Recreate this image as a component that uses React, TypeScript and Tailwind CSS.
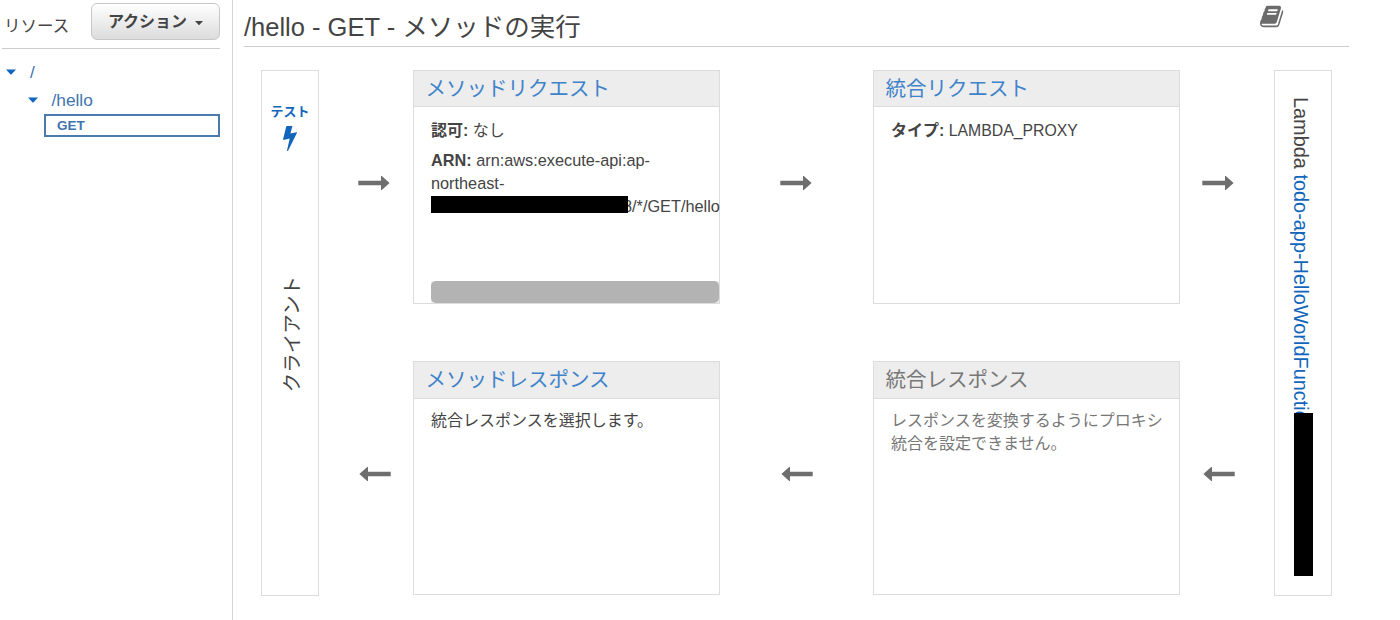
import React from 'react';

const RightArrow = ({ className = '' }: { className?: string }) => (
  <svg className={className} width="32" height="14" viewBox="0 0 32 14" fill="#6e6e6e">
    <path d="M0.3 4.7H23V0h0.8L31.6 7L23.8 14H23V9.3H0.3z" />
  </svg>
);

const Caret = ({ className = '' }: { className?: string }) => (
  <svg className={className} viewBox="0 0 10 5" fill="currentColor">
    <path d="M0 0H10L5.6 4.7Q5 5.2 4.4 4.7z" />
  </svg>
);

const BookIcon = () => (
  <svg width="25" height="25" viewBox="0 0 1792 1792" fill="#6b6b6b">
    <path d="M1639 478q40 57 18 129l-275 906q-19 64-76.500 107.500t-122.500 43.500h-923q-77 0-148.500-53.500t-99.500-131.500q-24-67-2-127 0-4 3-27t4-37q1-8-3-21.500t-3-19.500q2-11 8-21t16.500-23.500 16.500-23.500q23-38 45-91.500t30-91.500q3-10 .5-30t-.5-28q3-11 17-28t17-23q21-36 42-92t25-90q1-9-2.500-32t.5-28q4-13 22-30.500t22-22.500q19-26 42.500-84.500t27.500-96.500q1-8-3-25.500t-2-26.500q2-8 9-18t18-23 17-21q8-12 16.500-30.500t15-35 16-36 19.500-32 26.500-23.500 36-11.500 47.500 5.500l-1 3q38-9 51-9h761q74 0 114 56t18 130l-274 906q-36 119-71.500 153.500t-128.500 34.500h-869q-27 0-38 15-11 16-1 43 24 70 144 70h923q29 0 56-15.500t35-41.500l300-987q7-22 5-57 38 15 59 43zm-1064 2q-4 13 2 22.500t20 9.500h608q13 0 25.500-9.500t16.500-22.500l21-64q4-13-2-22.500t-20-9.500h-608q-13 0-25.500 9.500t-16.500 22.500zm-83 256q-4 13 2 22.500t20 9.500h608q13 0 25.500-9.500t16.500-22.500l21-64q4-13-2-22.500t-20-9.500h-608q-13 0-25.500 9.500t-16.500 22.500z" />
  </svg>
);

interface ArrowColumnProps {
  className: string;
}

// Request arrow on top, response arrow below
const ArrowColumn: React.FC<ArrowColumnProps> = ({ className }) => (
  <div className={`shrink-0 flex flex-col pt-[106px] gap-[277px] ${className}`}>
    <RightArrow />
    <RightArrow className="rotate-180 ml-px" />
  </div>
);

interface StageCardProps {
  title: string;
  disabled?: boolean;
  headerClass?: string;
  bodyClass?: string;
  children: React.ReactNode;
}

const StageCard: React.FC<StageCardProps> = ({ title, disabled = false, headerClass = 'h-9', bodyClass = 'pt-[10px]', children }) => (
  <section className={`h-[234px] border border-[#dcdcdc] flex flex-col ${disabled ? 'text-[#777]' : 'text-[#444]'}`}>
    <h2 className={`shrink-0 box-content border-b border-[#dcdcdc] bg-[#ededed] pl-[11.5px] text-[20.5px] leading-9 ${headerClass} ${disabled ? 'text-[#777]' : 'text-[#3f83cb]'}`}>
      {title}
    </h2>
    <div className={`flex-1 flex flex-col pl-[17px] text-base leading-[23px] ${bodyClass}`}>{children}</div>
  </section>
);

const Sidebar = () => (
  <aside className="w-[233px] shrink-0 border-r border-[#d4d4d4] pl-0.5 pr-3 text-[#444]">
    <div className="h-[49px] border-b border-[#ccc] flex items-start justify-between">
      <span className="text-[16.5px] leading-6 pt-[14px] pl-0.5">リソース</span>
      <button className="mt-[3px] w-[129px] h-[37px] rounded-md border border-[#c8c8c8] bg-linear-to-b from-white to-[#dcdcdc] flex items-center justify-center gap-2 text-base font-bold">
        アクション
        <Caret className="w-2 h-1 mt-0.5" />
      </button>
    </div>
    <ul className="text-[17.3px] leading-7 text-[#3f73ae] pt-[9px]">
      <li className="flex items-center pl-1">
        <Caret className="w-[10px] h-[6px] text-[#1166bb]" />
        <span className="pl-[14px]">/</span>
      </li>
      <li className="flex items-center pl-[26px]">
        <Caret className="w-[10px] h-[6px] text-[#1166bb]" />
        <span className="pl-[13.5px]">/hello</span>
      </li>
      <li className="ml-[42px] h-[23px] border-2 border-[#4a7aae] pl-[11px] text-[13.5px] leading-[19px] font-bold">GET</li>
    </ul>
  </aside>
);

const App = () => (
  <div className="w-[1400px] h-[620px] overflow-hidden bg-white flex font-['Liberation_Sans','Noto_Sans_CJK_JP',sans-serif]">
    <Sidebar />
    <main className="flex-1 pl-[11px]">
      <header className="w-[1105px] h-[47px] border-b border-[#ccc] flex items-start justify-between pr-[64px]">
        <h1 className="text-[25.5px] leading-[30px] pt-3 text-[#444]">/hello - GET - メソッドの実行</h1>
        <div className="pt-1">
          <BookIcon />
        </div>
      </header>

      <div className="flex items-start pl-[17px] pt-[23px]">
        <div className="w-[58px] h-[526px] shrink-0 border border-[#dcdcdc] flex flex-col items-center">
          <span className="pt-[31px] text-[13px] leading-5 font-bold text-[#1166bb]">テスト</span>
          <svg className="mt-1" width="14" height="25" viewBox="0 0 14 25" fill="#1166bb">
            <path d="M4 0H9.4L7.4 7.6L13.6 6.2Q14.2 6.3 13.9 7L5.2 24.6Q4.2 25.3 4 24.4L6.7 12.4L0.6 14Q-0.1 13.9 0.1 13.2L3.2 0.6Q3.4 0 4 0z" />
          </svg>
          <span className="mt-[125px] ml-1 [writing-mode:vertical-rl] [text-orientation:sideways] rotate-180 text-[19.5px] leading-6 text-[#444]">クライアント</span>
        </div>

        <ArrowColumn className="w-[94px] pl-[39px]" />

        <div className="w-[307px] shrink-0 flex flex-col gap-[57px]">
          <StageCard title="メソッドリクエスト" headerClass="h-[35px]" bodyClass="pt-3">
            <p>
              <b>認可:</b> なし
            </p>
            <div className="mt-[7px] text-[16.3px]">
              <p>
                <b>ARN:</b> arn:aws:execute-api:ap-
              </p>
              <p>northeast-</p>
              <p className="flex items-center">
                <span className="w-[197px] h-[17px] shrink-0 bg-black z-10 -mt-[5px]" />
                <span className="-ml-[5px] whitespace-nowrap">8/*/GET/hello</span>
              </p>
            </div>
            <div className="mt-auto h-[22px] bg-[#ececec]">
              <div className="h-full rounded-[5px] bg-[#b3b3b3]" />
            </div>
          </StageCard>
          <StageCard title="メソッドレスポンス">
            <p>統合レスポンスを選択します。</p>
          </StageCard>
        </div>

        <ArrowColumn className="w-[153px] pl-[60px]" />

        <div className="w-[307px] shrink-0 flex flex-col gap-[57px]">
          <StageCard title="統合リクエスト" headerClass="h-[35px]" bodyClass="pt-3">
            <p>
              <b>タイプ:</b> <span className="text-[15.8px]">LAMBDA_PROXY</span>
            </p>
          </StageCard>
          <StageCard title="統合レスポンス" disabled>
            <p className="w-[273px]">レスポンスを変換するようにプロキシ統合を設定できません。</p>
          </StageCard>
        </div>

        <ArrowColumn className="w-[94px] pl-[22px]" />

        <div className="w-[58px] h-[526px] shrink-0 border border-[#dcdcdc] flex flex-col items-center pt-[26px]">
          <div className="h-[316px] mr-[5px] [writing-mode:vertical-rl] text-[19.9px] leading-6 whitespace-nowrap text-[#444]">
            Lambda <span className="text-[#1166bb]">todo-app-HelloWorldFunctio</span>
          </div>
          <div className="w-[19px] h-[163px] bg-black z-10" />
        </div>
      </div>
    </main>
  </div>
);

export default App;
